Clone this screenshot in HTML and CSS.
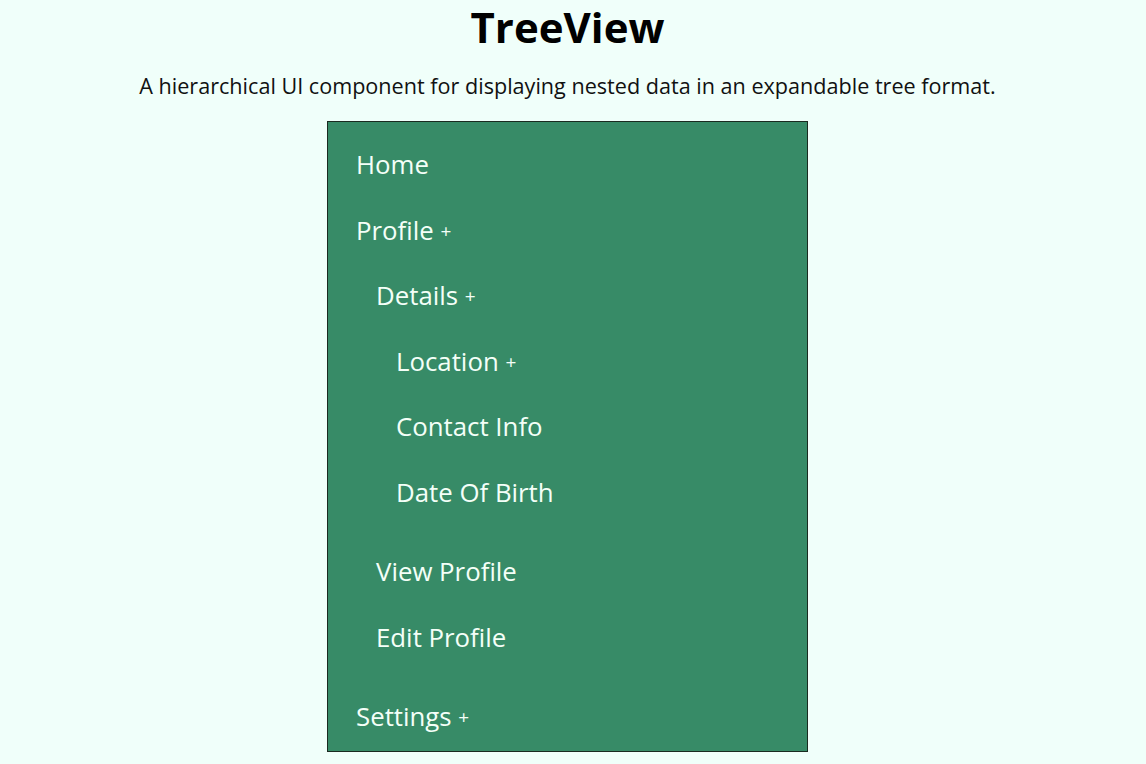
FILE: index.html
```html
<!DOCTYPE html>
<html lang="en">
<head>
<meta charset="utf-8">
<title>TreeView</title>
<link rel="stylesheet" href="styles.css">
</head>
<body>
<h1 class="title">TreeView</h1>
<p class="subtitle">A hierarchical UI component for displaying nested data in an expandable tree format.</p>
<div class="tree">
  <ul class="level level-1">
    <li><span class="label">Home</span></li>
    <li><span class="label">Profile <span class="toggle">+</span></span>
      <ul class="level level-2">
        <li><span class="label">Details <span class="toggle">+</span></span>
          <ul class="level level-3">
            <li><span class="label">Location <span class="toggle">+</span></span></li>
            <li><span class="label">Contact Info</span></li>
            <li><span class="label">Date Of Birth</span></li>
          </ul>
        </li>
        <li><span class="label">View Profile</span></li>
        <li><span class="label">Edit Profile</span></li>
      </ul>
    </li>
    <li><span class="label">Settings <span class="toggle">+</span></span></li>
  </ul>
</div>
</body>
</html>
```

FILE: styles.css
```css
html, body {
  margin: 0;
  padding: 0;
  background: #f0fffa;
  font-family: "Open Sans", "Noto Sans", sans-serif;
  color: #111;
}
body {
  padding-right: 11px;
}
.title {
  margin: 0;
  padding: 0;
  text-align: center;
  font-size: 42px;
  line-height: 54px;
  font-weight: 700;
  color: #000;
}
.subtitle {
  margin: 17px 0 0;
  text-align: center;
  font-size: 21.6px;
  line-height: 30px;
  color: #111;
}
.tree {
  box-sizing: border-box;
  width: 481px;
  margin: 20px auto 0;
  background: #378b67;
  border: 1px solid #1a2a20;
  padding: 10px 28px 1px;
}
.level {
  list-style: none;
  margin: 0;
  padding: 0;
}
.level-2, .level-3 {
  padding-left: 20px;
  margin-bottom: 14px;
}
.label {
  display: block;
  height: 65.5px;
  line-height: 65.5px;
  font-size: 25.8px;
  color: #f4fff8;
  white-space: nowrap;
}
.toggle {
  font-size: 19px;
  vertical-align: 2px;
}
```
